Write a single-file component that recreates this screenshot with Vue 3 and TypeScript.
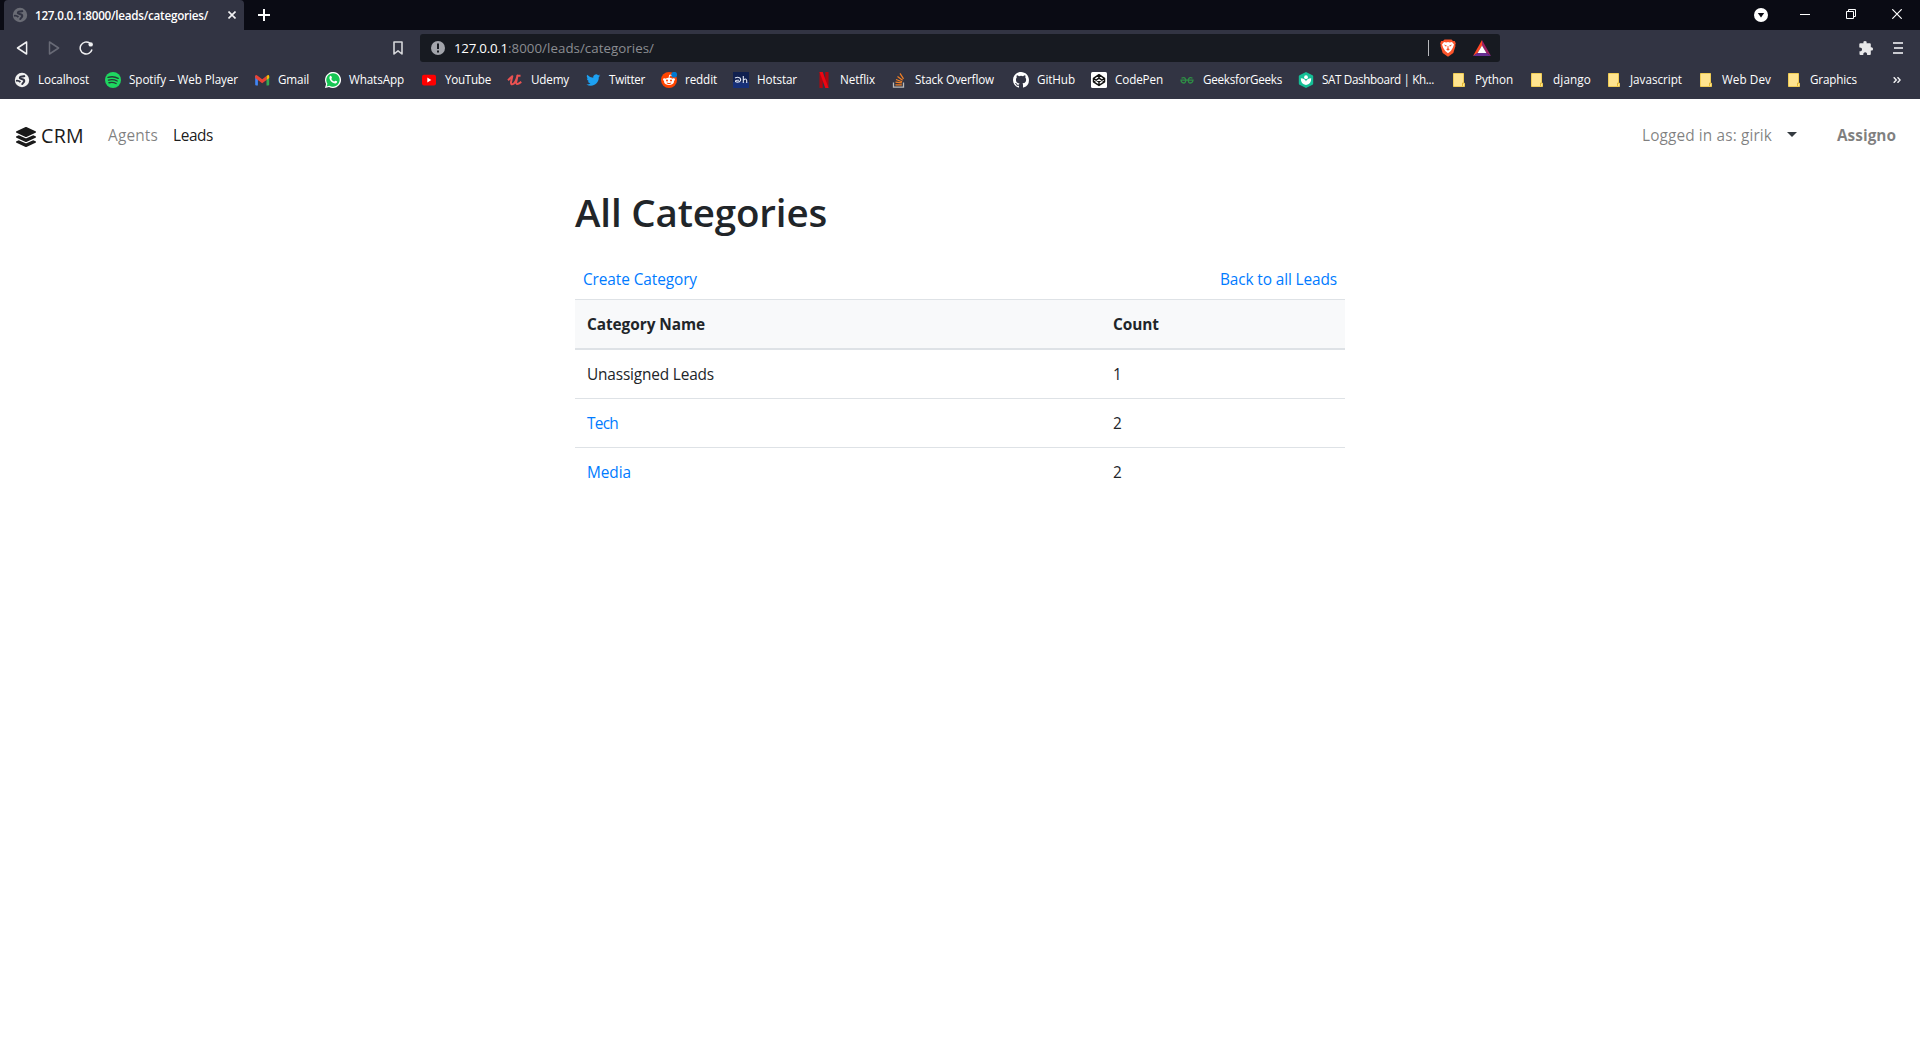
<script setup lang="ts">
import type { Directive } from 'vue'

interface Bookmark {
  icon: string
  label: string
  slot: number
  text: number
}

interface Category {
  name: string
  count: number
  link: boolean
  text: number
}

const bookmarks: Bookmark[] = [
  { icon: 'globe', label: 'Localhost', slot: 91, text: 51 },
  { icon: 'spotify', label: 'Spotify – Web Player', slot: 149, text: 109 },
  { icon: 'gmail', label: 'Gmail', slot: 71, text: 31 },
  { icon: 'whatsapp', label: 'WhatsApp', slot: 96, text: 55 },
  { icon: 'youtube', label: 'YouTube', slot: 86, text: 46 },
  { icon: 'udemy', label: 'Udemy', slot: 78, text: 38 },
  { icon: 'twitter', label: 'Twitter', slot: 76, text: 36 },
  { icon: 'reddit', label: 'reddit', slot: 72, text: 32 },
  { icon: 'hotstar', label: 'Hotstar', slot: 83, text: 40 },
  { icon: 'netflix', label: 'Netflix', slot: 75, text: 35 },
  { icon: 'stack', label: 'Stack Overflow', slot: 122, text: 79 },
  { icon: 'github', label: 'GitHub', slot: 78, text: 38 },
  { icon: 'codepen', label: 'CodePen', slot: 88, text: 48 },
  { icon: 'gfg', label: 'GeeksforGeeks', slot: 119, text: 79 },
  { icon: 'khan', label: 'SAT Dashboard | Kh...', slot: 153, text: 112 },
  { icon: 'folder', label: 'Python', slot: 78, text: 38 },
  { icon: 'folder', label: 'django', slot: 77, text: 38 },
  { icon: 'folder', label: 'Javascript', slot: 92, text: 52 },
  { icon: 'folder', label: 'Web Dev', slot: 88, text: 49 },
  { icon: 'folder', label: 'Graphics', slot: 107, text: 47 },
]

const categories: Category[] = [
  { name: 'Unassigned Leads', count: 1, link: false, text: 127 },
  { name: 'Tech', count: 2, link: true, text: 31 },
  { name: 'Media', count: 2, link: true, text: 44 },
]

// Adjusts letter spacing so a label takes up its intended width.
const vTrack: Directive<HTMLElement, number> = {
  mounted(el, binding) {
    const length = (el.textContent ?? '').length
    const natural = el.getBoundingClientRect().width
    el.style.letterSpacing = `${(binding.value - natural) / length}px`
  },
}
</script>

<template>
  <div class="window">
    <header class="chrome">
      <div class="titlebar">
        <div class="tab">
          <svg class="tab-globe" viewBox="0 0 16 16" width="16" height="16">
            <circle cx="8" cy="8" r="7.200" fill="#6a6c75" />
            <path d="M11 3.800C8.500 5 5.500 4 5.800 6.200 6.300 7.500 10.500 6.500 10.300 9 10 11 8.500 10.500 8 12.800M2 8.800C4 8.300 5 8.800 6.500 10" fill="none" stroke="#323443" stroke-width="1.900" />
          </svg>
          <span v-track="173" class="tab-title">127.0.0.1:8000/leads/categories/</span>
          <svg class="tab-close" viewBox="0 0 8 8" width="8" height="8">
            <path d="M.5.5l7 7M7.500.5l-7 7" stroke="#f2f2f4" stroke-width="1.600" />
          </svg>
        </div>
        <svg class="new-tab" viewBox="0 0 12 12" width="12" height="12">
          <path d="M6 0v12M0 6h12" stroke="#fff" stroke-width="2" />
        </svg>
        <div class="window-controls">
          <svg viewBox="0 0 14 14" width="14" height="14">
            <circle cx="7" cy="7" r="7" fill="#fff" />
            <path d="M3.800 5h6.400L7 9.400z" fill="#0a0b14" />
          </svg>
          <svg viewBox="0 0 10 10" width="10" height="10"><path d="M0 5.500h10" stroke="#fff" /></svg>
          <svg viewBox="0 0 10 10" width="10" height="10">
            <path d="M.5 2.500h7v7h-7zM2.500 2.500v-2h7v7h-2" fill="none" stroke="#fff" />
          </svg>
          <svg viewBox="0 0 10 10" width="10" height="10"><path d="M.3.300l9.400 9.400M9.700.3L.3 9.700" stroke="#fff" stroke-width="1.200" /></svg>
        </div>
      </div>

      <div class="toolbar">
        <svg class="back" viewBox="0 0 12 14" width="12" height="14">
          <path d="M10.600 1v12L1.500 7z" fill="none" stroke="#f0f0f2" stroke-width="1.500" stroke-linejoin="round" />
        </svg>
        <svg class="forward" viewBox="0 0 12 14" width="12" height="14">
          <path d="M1.500 1v12l9.100-6z" fill="none" stroke="#686a76" stroke-width="1.500" stroke-linejoin="round" />
        </svg>
        <svg class="reload" viewBox="0 0 15 14" width="15" height="14">
          <path d="M10.800 2.200A6 6 0 1 0 13 8.500" fill="none" stroke="#f0f0f2" stroke-width="1.500" />
          <circle cx="11.700" cy="3.400" r="2.200" fill="#f0f0f2" />
        </svg>
        <svg class="bookmark-page" viewBox="0 0 10 14" width="10" height="14">
          <path d="M1 1h8v12L5 9.800 1 13z" fill="none" stroke="#d5d6da" stroke-width="1.600" stroke-linejoin="round" />
        </svg>
        <div class="address">
          <svg class="info" viewBox="0 0 14 14" width="14" height="14">
            <circle cx="7" cy="7" r="7" fill="#a2a4ab" />
            <path d="M7 2.500v5.500M7 9.500v2" stroke="#171a21" stroke-width="2" />
          </svg>
          <span v-track="54" class="host">127.0.0.1</span><span v-track="146" class="path">:8000/leads/categories/</span>
          <span class="divider"></span>
          <svg class="brave" viewBox="0 0 16 18" width="16" height="18">
            <path d="M4.500.5h7l1.500 1.600 1.800-.1 1 2.500-.6 1.500.3 1-2.200 7L8 17.700 2.700 14 .5 7l.3-1L.2 4.500 1.200 2 3 2.100z" fill="#fb542b" />
            <path d="M4 3l2.300.5L8 3l1.700.5L12 3l2 2.600-1.200 3.200-2 3.200L8 14.200 5.200 12l-2-3.200L2 5.600z" fill="#fff" />
            <path d="M3.800 5.500l3 .9-.8 1.400zM12.200 5.500l-3 .9.8 1.400zM7.600 7h.8l.2 2.500 1.200.8L8 11.700l-1.800-1.400 1.200-.8z" fill="#fb542b" />
          </svg>
          <svg class="bat" viewBox="0 0 18 16" width="18" height="16">
            <path d="M9 0L0 16l4.500-2.800L9 5.500z" fill="#ff4724" />
            <path d="M9 0l9 16-4.500-2.800L9 5.500z" fill="#9e1f63" />
            <path d="M0 16h18l-4.500-2.900h-9z" fill="#662d91" />
            <path d="M9 5.400l4.400 7.700H4.600z" fill="#fff" />
          </svg>
        </div>
        <div class="toolbar-end">
          <svg viewBox="0 0 14 14" width="14" height="14">
            <path d="M1.300 2.300h3.200C4 .7 4.800 0 6 0s2.200.7 1.500 2.300h3.300q1 0 1 1v3C13.200 6 14 6.900 14 8s-.9 1.900-2.200 1.500v3.500q0 1-1 1H8.100c.2-1.900-.7-2.700-1.900-2.700S4.100 12.100 4.300 14H1.500q-1 0-1-1v-2.800c1.700.2 2.500-.6 2.500-1.800S2.100 6.400.3 6.600V3.300q0-1 1-1z" fill="#e8e8ea" />
          </svg>
          <svg viewBox="0 0 10 12" width="10" height="12"><path d="M0 1h10M1 6h9M0 11h10" stroke="#c9cad0" stroke-width="2" /></svg>
        </div>
      </div>

      <nav class="bookmarks">
        <a v-for="item in bookmarks" :key="item.label" class="bookmark" :style="{ width: item.slot + 'px' }">
          <svg class="bookmark-icon" viewBox="0 0 16 16" width="16" height="16">
            <g v-if="item.icon === 'globe'">
              <circle cx="8" cy="8" r="7.200" fill="#f1f1f1" />
              <path d="M11 3.800C8.500 5 5.500 4 5.800 6.200 6.300 7.500 10.500 6.500 10.300 9 10 11 8.500 10.500 8 12.800M2 8.800C4 8.300 5 8.800 6.500 10" fill="none" stroke="#323443" stroke-width="1.900" />
            </g>
            <g v-else-if="item.icon === 'spotify'">
              <circle cx="8" cy="8" r="8" fill="#1ed760" />
              <path d="M3 5.300c3.500-1 7.200-.7 10.200 1M3.500 8.100c3-.8 6-.5 8.700.9M4 10.700c2.400-.6 4.900-.4 7.100.8" fill="none" stroke="#263b35" stroke-width="1.400" stroke-linecap="round" />
            </g>
            <g v-else-if="item.icon === 'gmail'" transform="translate(.2 0)">
              <path d="M1 4h2.700v9.500H2q-1 0-1-1z" fill="#4285f4" />
              <path d="M12.300 4H15v8.500q0 1-1 1h-1.700z" fill="#34a853" />
              <path d="M12.300 4q2.700-2 2.700.5V6l-2.700 2z" fill="#fbbc04" />
              <path d="M1 4.500q0-2.500 2.700-.5L8 7.200 12.300 4v4L8 11.200 1 6z" fill="#ea4335" />
            </g>
            <g v-else-if="item.icon === 'whatsapp'">
              <path d="M0 16l1.100-4A8 8 0 1 1 4 14.900z" fill="#fff" />
              <path d="M1.600 14.400l.8-2.700a6.700 6.700 0 1 1 2.100 2z" fill="#16c653" />
              <path d="M4.800 4.200c1-1 1.600-.2 2.100 1.300q.2.500-.6 1.400c.8 1.400 1.700 2.100 3.100 2.700l.8-.9q.4-.3 1.800.6c.5.400-.1 1.900-1.400 2.200-3.100.3-7.600-4.300-5.800-7.300z" fill="#fff" />
            </g>
            <g v-else-if="item.icon === 'youtube'">
              <rect x="1" y="2.800" width="14" height="10.600" rx="2" fill="#f00" />
              <path d="M6.300 5.600v5l4-2.500z" fill="#fff" />
            </g>
            <path v-else-if="item.icon === 'udemy'" d="M1 8.200L5.300 4.200 4 10.300q-.2 3.200 2.700 1.400 1.600-1.200 2.600-4L10.500 3.500 9.200 10.300q0 2.400 2.400 1.300l2.700-1.700M10 3.800h3.500" fill="none" stroke="#eb5252" stroke-width="2" stroke-linejoin="round" />
            <path v-else-if="item.icon === 'twitter'" d="M15.300 3.500q-.8.400-1.600.5.900-.6 1.200-1.500-.9.500-1.800.7a2.900 2.900 0 0 0-4.900 2.600Q4.600 5.600 2.200 2.800c-.8 1.400-.4 3 .9 3.900q-.7 0-1.300-.4 0 2.200 2.300 2.900-.6.100-1.300 0 .6 1.900 2.700 2-1.900 1.400-4.200 1.200c5.800 3.500 12.700-.2 12.500-7.400q.9-.6 1.500-1.500z" fill="#1da1f2" />
            <g v-else-if="item.icon === 'reddit'">
              <circle cx="8" cy="8" r="8" fill="#ff4500" />
              <ellipse cx="8" cy="9.400" rx="5" ry="3.700" fill="#fff" />
              <circle cx="3.400" cy="7.600" r="1.400" fill="#fff" /><circle cx="12.600" cy="7.600" r="1.400" fill="#fff" />
              <path d="M8 6l.7-3 2.500.6" fill="none" stroke="#fff" />
              <circle cx="6" cy="8.500" r="1" fill="#ff4500" /><circle cx="10" cy="8.500" r="1" fill="#ff4500" />
              <path d="M5.800 11q2.200 1.300 4.400 0" fill="none" stroke="#ff4500" />
              <circle cx="13.200" cy="2.700" r="2.900" fill="#0079d3" />
            </g>
            <g v-else-if="item.icon === 'hotstar'">
              <rect width="16" height="16" fill="#10204f" /><rect y="10" width="16" height="6" fill="#173078" />
              <path d="M2 6c3-1.500 6.500-.3 5.500 2.500-.8 2.200-5.500 2-5 .3.300-.9 2.500-.6 3.500-.5M10.300 4v7M10.300 8.300q2.700-2.500 3.400 0V11" fill="none" stroke="#dfe5f5" stroke-width="1.100" />
            </g>
            <g v-else-if="item.icon === 'netflix'">
              <path d="M3.500 0h3.200v16H3.500zM9.300 0h3.200v16H9.300z" fill="#b1060f" />
              <path d="M3.500 0h3.200l5.800 16H9.300z" fill="#ee0612" />
            </g>
            <g v-else-if="item.icon === 'stack'">
              <path d="M2.500 10.500v4.700h10v-4.700" fill="none" stroke="#bcbbbb" stroke-width="1.300" />
              <path d="M4.400 12.800h6.400M4.500 10.100l6.300.8M5 7.500l6.100 2.200M6.500 4.600l5.100 3.600M9 1.400l3.500 5.400" stroke="#f48024" stroke-width="1.200" />
            </g>
            <path v-else-if="item.icon === 'github'" d="M8 0C3.580 0 0 3.580 0 8c0 3.540 2.290 6.530 5.470 7.590.4.070.55-.17.55-.38 0-.19-.01-.82-.01-1.490-2.010.37-2.530-.49-2.690-.94-.09-.23-.48-.94-.82-1.130-.28-.15-.68-.52-.01-.53.63-.01 1.080.58 1.230.82.720 1.210 1.870.87 2.330.66.070-.52.280-.87.510-1.070-1.780-.2-3.640-.89-3.640-3.950 0-.87.310-1.590.82-2.150-.08-.2-.36-1.020.08-2.120 0 0 .67-.21 2.200.82a7.600 7.600 0 0 1 4 0c1.530-1.040 2.200-.82 2.200-.82.440 1.100.16 1.920.08 2.120.51.560.82 1.270.82 2.150 0 3.070-1.870 3.750-3.650 3.950.29.250.54.730.54 1.480 0 1.070-.01 1.930-.01 2.200 0 .21.150.46.550.38A8 8 0 0 0 16 8c0-4.420-3.580-8-8-8z" fill="#fff" />
            <g v-else-if="item.icon === 'codepen'">
              <rect width="16" height="16" rx="1.500" fill="#fff" />
              <path d="M8 2.700l5.500 3.600v3.500L8 13.400 2.500 9.800V6.300zM2.500 6.300L8 10l5.500-3.700M2.500 9.800L8 6.200l5.500 3.600M8 2.700v3.500M8 10v3.400" fill="none" stroke="#111" stroke-width="1.500" stroke-linejoin="round" />
            </g>
            <path v-else-if="item.icon === 'gfg'" d="M2.500 6.200Q5.500 4.400 6.700 7.500 7 11 4.600 11 2.200 10.700 2 8.200h12q-.2 2.500-2.600 2.800Q9 11 9.300 7.500q1.200-3.100 4.200-1.300" fill="none" stroke="#2f8d46" stroke-width="1.300" />
            <g v-else-if="item.icon === 'khan'">
              <path d="M8 0l6.500 3.300q.7.400.7 1.200v7q0 .8-.7 1.200L8 16l-6.500-3.300q-.7-.4-.7-1.200v-7q0-.8.7-1.200z" fill="#14bf96" />
              <circle cx="8" cy="5.200" r="1.900" fill="#fff" />
              <path d="M2.800 6.300Q7.300 6.500 8 9.500q.7-3 5.200-3.200 0 6.400-5.200 6.600-5.200-.2-5.200-6.600z" fill="#fff" />
            </g>
            <g v-else>
              <path d="M2.500 1.500h10v9.700h1v3.300h-11z" fill="#ffe48f" stroke="#f0cc55" />
              <path d="M11.500 14v-3h1.200" fill="none" stroke="#e3b934" />
            </g>
          </svg>
          <span v-track="item.text">{{ item.label }}</span>
        </a>
        <svg class="overflow" viewBox="0 0 8 6" width="8" height="6">
          <path d="M.7.2L3.300 3 .7 5.800M4.500.2L7.100 3 4.500 5.800" fill="none" stroke="#f2f2f4" stroke-width="1.400" />
        </svg>
      </nav>
    </header>

    <nav class="navbar">
      <a class="brand">
        <svg viewBox="0 0 512 512" width="20" height="20">
          <path d="M12.410 148.020l232.940 105.670c6.800 3.090 14.490 3.090 21.290 0l232.940-105.670c16.550-7.510 16.550-32.520 0-40.030L266.650 2.310a25.607 25.607 0 0 0-21.290 0L12.410 107.980c-16.550 7.510-16.550 32.530 0 40.040zm487.180 88.280l-58.090-26.330-161.640 73.270c-7.560 3.430-15.590 5.170-23.860 5.170s-16.290-1.740-23.860-5.170L70.510 209.970l-58.100 26.330c-16.550 7.500-16.550 32.500 0 40l232.940 105.590c6.800 3.080 14.490 3.080 21.290 0L499.590 276.300c16.550-7.500 16.550-32.500 0-40zm0 127.800l-57.870-26.230-161.860 73.370c-7.560 3.430-15.590 5.170-23.860 5.170s-16.290-1.740-23.860-5.170L70.290 337.870 12.410 364.100c-16.550 7.500-16.550 32.500 0 40l232.940 105.590c6.800 3.080 14.490 3.080 21.290 0L499.590 404.100c16.550-7.500 16.550-32.500 0-40z" fill="#1a1a1a" />
        </svg>
        <span v-track="43">CRM</span>
      </a>
      <a class="nav-link agents"><span v-track="50">Agents</span></a>
      <a class="nav-link active"><span v-track="40">Leads</span></a>
      <div class="account">
        <span v-track="130">Logged in as: girik</span>
        <i class="caret"></i>
        <strong v-track="59">Assigno</strong>
      </div>
    </nav>

    <main class="content">
      <h1><span v-track="252">All Categories</span></h1>
      <div class="actions">
        <a><span v-track="114">Create Category</span></a>
        <a><span v-track="117">Back to all Leads</span></a>
      </div>
      <div class="table">
        <div class="row head">
          <div class="name"><span v-track="118">Category Name</span></div>
          <div class="count"><span v-track="46">Count</span></div>
        </div>
        <div v-for="category in categories" :key="category.name" class="row">
          <div class="name" :class="{ link: category.link }">
            <span v-track="category.text">{{ category.name }}</span>
          </div>
          <div class="count">{{ category.count }}</div>
        </div>
      </div>
    </main>
  </div>
</template>

<style>
body {
  margin: 0;
  background: #fff;
}
</style>

<style scoped>
.window {
  width: 1920px;
  height: 1040px;
  overflow: hidden;
  background: #fff;
  color: #212529;
  font-family: "Open Sans", "Noto Sans", sans-serif;
  font-size: 15.400px;
  line-height: 24px;
  white-space: nowrap;
}
svg {
  display: block;
  flex: none;
}
.chrome {
  height: 99px;
  background: #323443;
  color: #fff;
}
.titlebar {
  display: flex;
  height: 30px;
  background: #0a0b14;
}
.tab {
  display: flex;
  align-items: center;
  box-sizing: border-box;
  width: 240px;
  height: 30px;
  margin-left: 4px;
  padding: 0 8px;
  border-radius: 4px 4px 0 0;
  background: #323443;
}
.tab-title {
  margin-left: 7px;
  padding-bottom: 1px;
  font-size: 11.700px;
  font-weight: 600;
}
.tab-close {
  margin-left: auto;
}
.new-tab {
  margin: 9px 0 0 14px;
}
.window-controls {
  display: flex;
  align-items: center;
  height: 28px;
  margin-left: auto;
  padding-right: 18px;
  gap: 36px;
}
.window-controls svg:first-child {
  margin: 2px -4px 0 0;
}
.toolbar {
  display: flex;
  align-items: center;
  height: 36px;
}
.back {
  margin-left: 16px;
}
.forward {
  margin-left: 20px;
}
.reload {
  margin-left: 19px;
}
.bookmark-page {
  margin-left: 299px;
}
.address {
  display: flex;
  align-items: center;
  box-sizing: border-box;
  width: 1080px;
  height: 28px;
  margin-left: 17px;
  padding-left: 11px;
  border-radius: 3px;
  background: #171a21;
  font-size: 13.300px;
}
.host {
  margin-left: 9px;
}
.path {
  color: #8b8d91;
}
.divider {
  width: 1px;
  height: 16px;
  margin-left: auto;
  background: #b8b9bd;
}
.brave {
  margin-left: 11px;
}
.bat {
  margin: 0 9px 0 17px;
}
.toolbar-end {
  display: flex;
  align-items: center;
  margin-left: auto;
  padding-right: 17px;
  gap: 20px;
}
.bookmarks {
  display: flex;
  align-items: center;
  height: 28px;
  padding-left: 14px;
}
.bookmark {
  display: flex;
  flex: none;
  align-items: center;
  font-size: 11.700px;
  line-height: 16px;
}
.bookmark span {
  padding-bottom: 2px;
}
.bookmark-icon {
  margin-right: 8px;
}
.navbar {
  display: flex;
  align-items: center;
  height: 73px;
  padding: 0 24px 0 16px;
}
.brand {
  display: flex;
  align-items: center;
  color: #1a1a1a;
  font-size: 19.600px;
}
.brand svg {
  margin: 3px 5px 0 0;
}
.nav-link {
  color: rgba(0, 0, 0, 0.5);
}
.agents {
  margin: 0 15px 0 24px;
}
.nav-link.active {
  color: rgba(0, 0, 0, 0.9);
}
.account {
  display: flex;
  align-items: center;
  margin-left: auto;
  color: rgba(0, 0, 0, 0.5);
}
.caret {
  margin: 0 40px 3px 15px;
  border-top: 5px solid #343a40;
  border-right: 5px solid transparent;
  border-left: 5px solid transparent;
}
.content {
  width: 770px;
  margin-left: 575px;
}
h1 {
  height: 48px;
  margin: 16px 0 0;
  font-size: 38.500px;
  font-weight: 600;
  line-height: 48px;
}
.actions {
  display: flex;
  justify-content: space-between;
  margin-top: 32px;
  padding: 0 8px;
  color: #007bff;
}
.table {
  margin-top: 7px;
}
.row {
  display: flex;
  box-sizing: border-box;
  height: 49px;
  padding: 13px 12px 11px;
  border-top: 1px solid #dee2e6;
}
.row.head {
  height: 51px;
  border-bottom: 2px solid #dee2e6;
  background: #f8f9fa;
  font-weight: 700;
}
.row.head + .row {
  height: 48px;
  border-top: 0;
}
.name {
  width: 526px;
}
.link {
  color: #007bff;
}
</style>
